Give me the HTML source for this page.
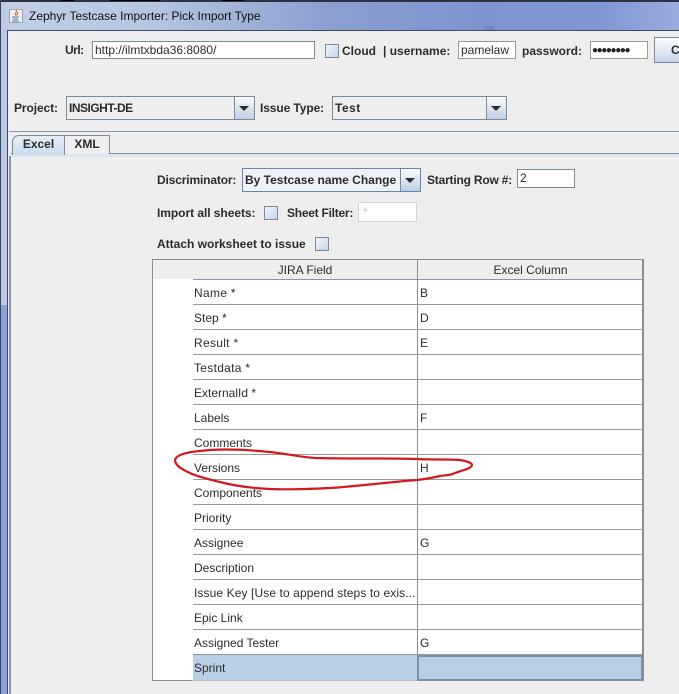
<!DOCTYPE html>
<html><head><meta charset="utf-8">
<style>
html,body{margin:0;padding:0}
body{width:679px;height:694px;overflow:hidden;position:relative;background:#eeeeee;font-family:"Liberation Sans",sans-serif;font-size:12px;color:#2c2c2c}
.a{position:absolute}
.l{position:absolute;font-weight:bold;color:#2c2c2c;white-space:nowrap;line-height:16px}
.inp{position:absolute;box-sizing:border-box;background:#fff;border:1px solid #7a8a99;line-height:17px;padding-left:2px;white-space:nowrap;overflow:hidden;color:#2c2c2c}
.cb{position:absolute;box-sizing:border-box;width:14px;height:14px;border:1px solid #7a8a99;background:linear-gradient(135deg,#f2f6fb,#c4d3e6)}
.combo{position:absolute;box-sizing:border-box;border:1px solid #7a8a99;background:#eeeeee;font-weight:bold;line-height:22px;padding-left:2px;white-space:nowrap}
.combo.sel{background:#eef2f8;border-color:#6382bf}
.arr{position:absolute;top:0;right:0;bottom:0;width:19px;border-left:1px solid #7a8a99;background:linear-gradient(#fafcfe,#bccfe4)}
.arr:after{content:"";position:absolute;left:4px;top:9px;border-left:5px solid transparent;border-right:5px solid transparent;border-top:5px solid #2c2c2c}
.h{position:absolute;height:1px;background:#999;left:193px;width:449px}
.c{position:absolute;line-height:16px;white-space:nowrap;color:#2c2c2c}
</style></head><body>

<!-- window chrome -->
<div class="a" style="left:0;top:2px;width:679px;height:29px;background:linear-gradient(90deg,#c4cfe6 0,#b8c5e2 22%,#8c9fd0 48%,#7f93d0 70%,#7f95d4 88%,#9babde 100%)"></div>
<div class="a" style="left:0;top:0;width:679px;height:2px;background:#2b3242"></div>
<div class="a" style="left:60px;top:0;width:14px;height:1px;background:#000"></div>
<div class="a" style="left:110px;top:0;width:50px;height:1px;background:#000"></div>
<div class="a" style="left:222px;top:0;width:22px;height:1px;background:#000"></div>
<div class="a" style="left:484px;top:26px;width:10px;height:4px;background:#7486c4"></div>
<div class="a" style="left:0;top:30px;width:679px;height:1px;background:#3d4a63"></div>
<div class="a" style="left:0;top:2px;width:7px;height:692px;background:#bcc9e4"></div>
<div class="a" style="left:1px;top:305px;width:6px;height:389px;background:#8c9fd8"></div>
<div class="a" style="left:0;top:0;width:1px;height:694px;background:#39445c"></div>
<div class="a" style="left:7px;top:30px;width:1px;height:664px;background:#3d4a63"></div>
<div class="a" style="left:8px;top:31px;width:3px;height:663px;background:#ecf0f6"></div>
<div class="a" style="left:9px;top:156px;width:2px;height:538px;background:#8397bb"></div>

<!-- title icon -->
<div class="a" style="left:9px;top:9px;width:14px;height:14px;box-sizing:border-box;border:1px solid #9aa3ad;background:#eef0f2"></div>
<svg class="a" style="left:10px;top:10px" width="12" height="12" viewBox="0 0 12 12"><path d="M6 0C8 2 4 3 6 5.5M8 2C8 4 6.5 4 7 5.5" stroke="#d8552a" fill="none"/><path d="M2 7h7M3 9h5M2 11h7" stroke="#56789c" fill="none"/></svg>
<div class="a" style="left:29px;top:8px;font-size:12px;line-height:16px;color:#111;white-space:nowrap">Zephyr Testcase Importer: Pick Import Type</div>

<!-- top row -->
<div class="l" style="left:65px;top:42px;letter-spacing:-.5px">Url:</div>
<div class="inp" style="left:92px;top:41px;width:223px;height:18px">http://ilmtxbda36:8080/</div>
<div class="cb" style="left:325px;top:44px"></div>
<div class="l" style="left:342px;top:43px">Cloud</div>
<div class="l" style="left:383px;top:43px">| username:</div>
<div class="inp" style="left:458px;top:41px;width:58px;height:18px;border-color:#999">pamelaw</div>
<div class="l" style="left:522px;top:43px">password:</div>
<div class="inp" style="left:590px;top:41px;width:58px;height:18px;border-color:#999;font-size:10px;letter-spacing:-1.4px;padding-left:1px;color:#222">●●●●●●●●</div>
<div class="a" style="left:654px;top:37px;width:40px;height:26px;box-sizing:border-box;border:1px solid #7a8a99;background:linear-gradient(#fbfcfe,#c8d6e8);font-weight:bold;line-height:24px;padding-left:16px">C</div>

<!-- project row -->
<div class="l" style="left:14px;top:100px;letter-spacing:-.1px">Project:</div>
<div class="combo" style="left:66px;top:96px;width:189px;height:24px;letter-spacing:-.5px">INSIGHT-DE<div class="arr"></div></div>
<div class="l" style="left:260px;top:100px;letter-spacing:-.1px">Issue Type:</div>
<div class="combo" style="left:332px;top:96px;width:175px;height:24px;letter-spacing:.5px">Test<div class="arr"></div></div>

<!-- separator & tabs -->
<div class="a" style="left:9px;top:131px;width:670px;height:1px;background:#8a97a6"></div>
<div class="a" style="left:11px;top:153px;width:668px;height:1px;background:#7b8fa8"></div>
<div class="a" style="left:11px;top:154px;width:668px;height:3px;background:#dde7f2"></div>
<div class="a" style="left:12px;top:135px;width:53px;height:20px;box-sizing:border-box;border:1px solid #7a8a99;border-bottom:0;border-top-left-radius:7px;background:linear-gradient(#e6eff8,#c8dbee);font-weight:bold;text-align:center;line-height:17px">Excel</div>
<div class="a" style="left:65px;top:135px;width:45px;height:19px;box-sizing:border-box;border:1px solid #7a8a99;border-left:0;border-bottom:0;background:#eeeeee;font-weight:bold;text-align:center;line-height:17px">XML</div>

<!-- form -->
<div class="l" style="left:157px;top:172px;letter-spacing:-.15px">Discriminator:</div>
<div class="combo sel" style="left:242px;top:168px;width:179px;height:24px">By Testcase name Change<div class="arr"></div></div>
<div class="l" style="left:427px;top:172px;letter-spacing:-.2px">Starting Row #:</div>
<div class="inp" style="left:517px;top:169px;width:58px;height:19px">2</div>

<div class="l" style="left:157px;top:205px;letter-spacing:-.05px">Import all sheets:</div>
<div class="cb" style="left:264px;top:206px"></div>
<div class="l" style="left:287px;top:205px;letter-spacing:-.25px">Sheet Filter:</div>
<div class="inp" style="left:358px;top:202px;width:59px;height:20px;border-color:#ccd6e2;color:#b8c4d2;line-height:19px;padding-left:4px">*</div>

<div class="l" style="left:157px;top:236px">Attach worksheet to issue</div>
<div class="cb" style="left:315px;top:237px"></div>

<!-- table -->
<div class="a" style="left:152px;top:259px;width:492px;height:422px;box-sizing:border-box;border:1px solid #8a8f96;border-right:2px solid #8a8f96;background:#fff"></div>
<div class="a" style="left:153px;top:260px;width:489px;height:19px;background:#eeeeee"></div>
<div class="a" style="left:193px;top:279px;width:449px;height:1px;background:#8a97a6"></div>
<div class="a" style="left:153px;top:279px;width:40px;height:1px;background:#fff"></div>
<div class="a" style="left:193px;top:655px;width:224px;height:25px;background:#b8cfe6"></div>
<div class="a" style="left:417px;top:655px;width:226px;height:26px;box-sizing:border-box;border:2px solid #7a90ac;background:#b8cfe6"></div>
<div class="a" style="left:417px;top:260px;width:1px;height:395px;background:#8a8f96"></div>
<div class="a" style="left:192px;top:680px;width:225px;height:1px;background:#b4bcc6"></div>

<div class="h" style="top:304px"></div><div class="h" style="top:329px"></div><div class="h" style="top:354px"></div><div class="h" style="top:379px"></div><div class="h" style="top:404px"></div><div class="h" style="top:429px"></div><div class="h" style="top:454px"></div><div class="h" style="top:479px"></div><div class="h" style="top:504px"></div><div class="h" style="top:529px"></div><div class="h" style="top:554px"></div><div class="h" style="top:579px"></div><div class="h" style="top:604px"></div><div class="h" style="top:629px"></div><div class="h" style="top:654px"></div>

<div class="c" style="left:193px;width:224px;text-align:center;top:262px">JIRA Field</div>
<div class="c" style="left:418px;width:225px;text-align:center;top:262px">Excel Column</div>

<div class="c" style="left:194px;top:285px;letter-spacing:.3px">Name *</div><div class="c" style="left:420px;top:285px">B</div>
<div class="c" style="left:194px;top:310px">Step *</div><div class="c" style="left:420px;top:310px">D</div>
<div class="c" style="left:194px;top:335px;letter-spacing:.3px">Result *</div><div class="c" style="left:420px;top:335px">E</div>
<div class="c" style="left:194px;top:360px;letter-spacing:.3px">Testdata *</div>
<div class="c" style="left:194px;top:385px">ExternalId *</div>
<div class="c" style="left:194px;top:410px">Labels</div><div class="c" style="left:420px;top:410px">F</div>
<div class="c" style="left:194px;top:435px">Comments</div>
<div class="c" style="left:194px;top:460px">Versions</div><div class="c" style="left:420px;top:460px">H</div>
<div class="c" style="left:194px;top:485px">Components</div>
<div class="c" style="left:194px;top:510px">Priority</div>
<div class="c" style="left:194px;top:535px">Assignee</div><div class="c" style="left:420px;top:535px">G</div>
<div class="c" style="left:194px;top:560px">Description</div>
<div class="c" style="left:194px;top:585px;width:223px;overflow:hidden;letter-spacing:.1px">Issue Key [Use to append steps to exis...</div>
<div class="c" style="left:194px;top:610px">Epic Link</div>
<div class="c" style="left:194px;top:635px">Assigned Tester</div><div class="c" style="left:420px;top:635px">G</div>
<div class="c" style="left:194px;top:660px">Sprint</div>

<!-- red annotation -->
<svg class="a" style="left:0;top:0" width="679" height="694" viewBox="0 0 679 694">
<path d="M190 473C181 469 175 465 175 460C176 455 187 452 200 451C215 449 240 449 270 452C288 454 300 457 315 458C350 459 385 458 417 459C435 460 450 459 460 460C466 461 472 463 472 465C471 469 463 470 455 473C449 476 445 475 440 476C432 478 425 479 417 480C390 482 360 486 330 488C310 489 290 490 270 489C250 488 235 486 220 482C208 479 198 477 190 473Z" fill="none" stroke="#d01a20" stroke-width="2.2" stroke-linejoin="round"/>
</svg>
</body></html>
